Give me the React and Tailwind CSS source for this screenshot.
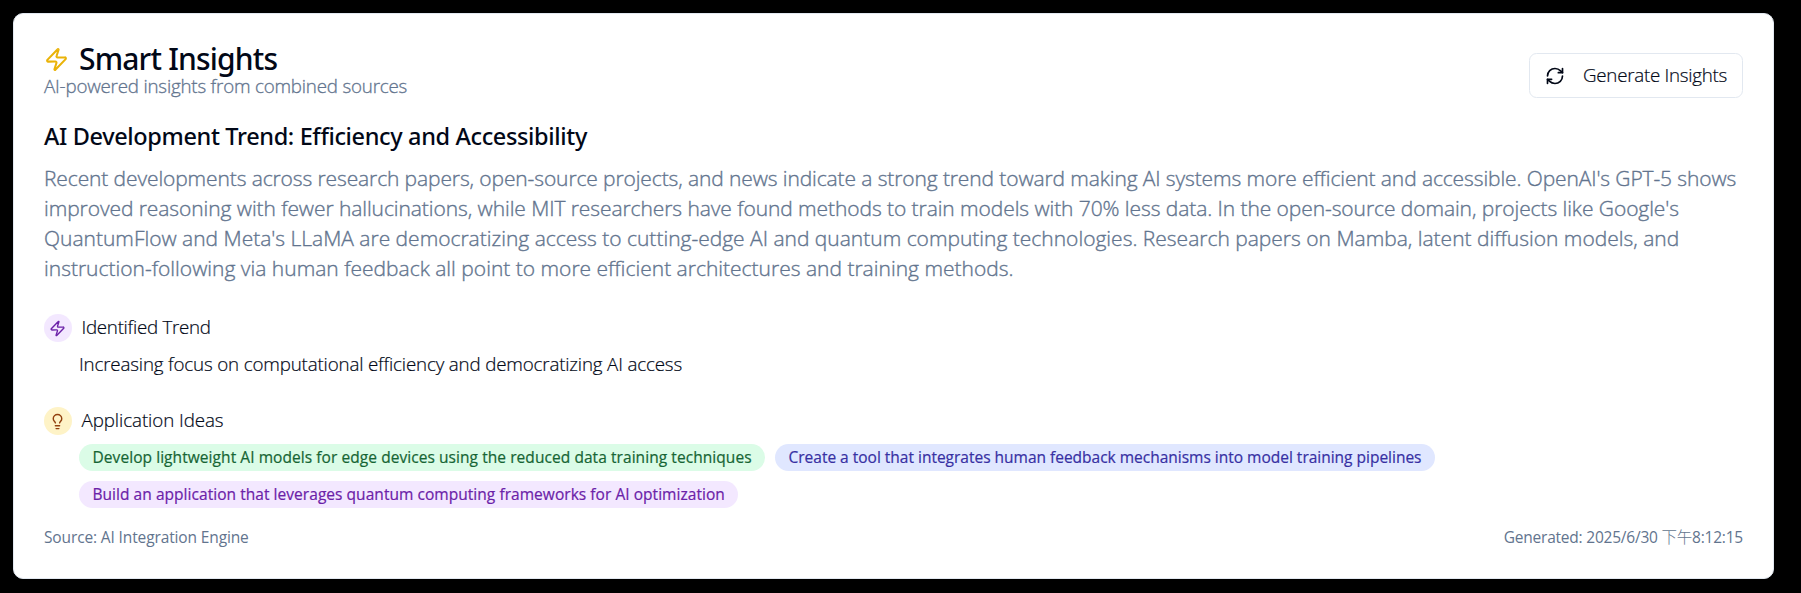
import React from 'react';
import { Zap, RefreshCw, Lightbulb } from 'lucide-react';

const summary = [
  {
    text: "Recent developments across research papers, open-source projects, and news indicate a strong trend toward making AI systems more efficient and accessible. OpenAI's GPT-5 shows",
    spacing: 'tracking-[-0.113px]',
  },
  {
    text: "improved reasoning with fewer hallucinations, while MIT researchers have found methods to train models with 70% less data. In the open-source domain, projects like Google's",
    spacing: 'tracking-[-0.078px]',
  },
  {
    text: "QuantumFlow and Meta's LLaMA are democratizing access to cutting-edge AI and quantum computing technologies. Research papers on Mamba, latent diffusion models, and",
    spacing: 'tracking-[-0.008px]',
  },
  {
    text: 'instruction-following via human feedback all point to more efficient architectures and training methods.',
    spacing: 'tracking-[0px]',
  },
];

const ideas = [
  {
    text: 'Develop lightweight AI models for edge devices using the reduced data training techniques',
    style: 'w-[686px] bg-green-100 text-[#166534] tracking-[0.065px]',
  },
  {
    text: 'Create a tool that integrates human feedback mechanisms into model training pipelines',
    style: 'w-[660px] bg-indigo-100 text-[#3730a3] tracking-[-0.007px]',
  },
  {
    text: 'Build an application that leverages quantum computing frameworks for AI optimization',
    style: 'w-[659px] bg-purple-100 text-[#6b21a8] tracking-[0.045px]',
  },
];

function Section({ icon, badge, title, titleStyle }) {
  return (
    <div className="flex h-7 items-center gap-[9.5px]">
      <span className={`flex size-7 shrink-0 items-center justify-center rounded-full ${badge}`}>{icon}</span>
      <h4 className={`-mt-[2px] text-[18.75px] leading-7 font-light [-webkit-text-stroke:0.2px] ${titleStyle}`}>{title}</h4>
    </div>
  );
}

export default function App() {
  return (
    <div className="h-[593px] w-[1801px] bg-black pt-[13px] pl-[13px] font-['Open_Sans','Noto_Sans_CJK_TC',sans-serif] whitespace-nowrap text-[#020817]">
      <div className="flex h-[566px] w-[1761px] flex-col rounded-[10px] border border-slate-200 bg-white px-[30px] pt-[29px]">
        <div className="flex h-[68px] items-start justify-between">
          <div>
            <div className="flex h-[32px] items-center gap-[10px]">
              <Zap className="size-[25px] text-[#eab308]" />
              <h2 className="font-['Noto_Sans',sans-serif] text-[30px] leading-[32px] font-medium tracking-[-0.82px]">
                Smart Insights
              </h2>
            </div>
            <p className="text-[18.75px] leading-[21px] font-light tracking-[-0.2px] text-slate-500 [-webkit-text-stroke:0.3px]">
              AI-powered insights from combined sources
            </p>
          </div>
          <button className="mt-[10px] flex h-[45px] w-[214px] items-center rounded-[7.5px] border border-slate-200 pl-[15px]">
            <RefreshCw className="size-5" />
            <span className="ml-[18px] text-[18.75px] font-light tracking-[-0.26px] [-webkit-text-stroke:0.2px]">
              Generate Insights
            </span>
          </button>
        </div>

        <h3 className="mt-[10px] font-['Noto_Sans',sans-serif] text-[23.5px] leading-[30px] font-medium tracking-[-0.36px]">
          AI Development Trend: Efficiency and Accessibility
        </h3>

        <div className="mt-[12px] text-[21px] leading-[30px] font-light text-slate-500 [-webkit-text-stroke:0.35px]">
          {summary.map((line) => (
            <p key={line.text} className={line.spacing}>{line.text}</p>
          ))}
        </div>

        <div className="mt-[31px]">
          <Section
            icon={<Zap className="mr-px size-[17px]" />}
            badge="bg-purple-100 text-[#6b21a8]"
            title="Identified Trend"
            titleStyle="tracking-[-0.28px]"
          />
          <p className="mt-[8px] ml-[35px] text-[18.75px] leading-7 font-light tracking-[-0.165px] [-webkit-text-stroke:0.2px]">
            Increasing focus on computational efficiency and democratizing AI access
          </p>
        </div>

        <div className="mt-[29px]">
          <Section
            icon={<Lightbulb className="mr-px size-[17px]" />}
            badge="bg-[#fef3c7] text-[#92400e]"
            title="Application Ideas"
            titleStyle="tracking-[-0.07px]"
          />
          <div className="mt-[9px] ml-[35px] flex flex-wrap gap-[10px]">
            {ideas.map((idea) => (
              <span
                key={idea.text}
                className={`h-[27px] rounded-full pl-[13.5px] text-[15.5px] leading-[26px] [-webkit-text-stroke:0.2px] ${idea.style}`}
              >
                {idea.text}
              </span>
            ))}
          </div>
        </div>

        <div className="mt-[17px] flex items-center justify-between text-[15.5px] leading-6 text-slate-500">
          <span className="tracking-[-0.13px]">Source: AI Integration Engine</span>
          <span className="tracking-[-0.22px]">
            Generated: 2025/6/30 <span className="font-light">下午</span>8:12:15
          </span>
        </div>
      </div>
    </div>
  );
}
